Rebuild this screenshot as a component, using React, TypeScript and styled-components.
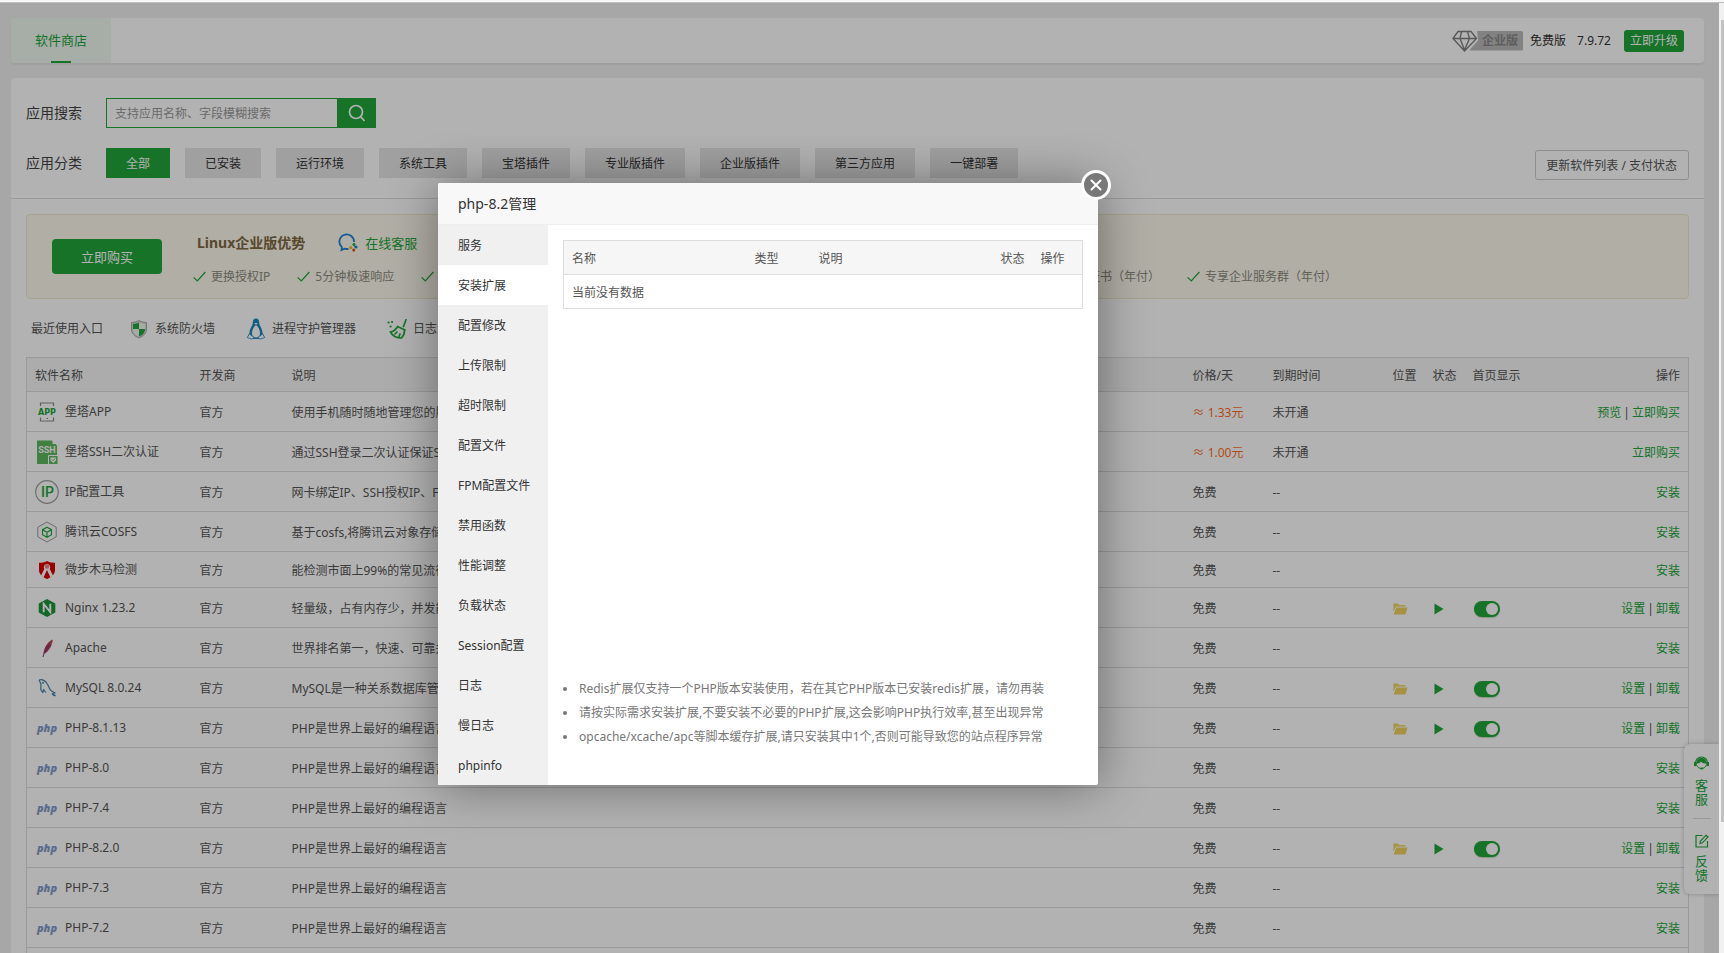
import React from "react";
import styled, { createGlobalStyle } from "styled-components";

const green = "#20a53a";

const GlobalStyle = createGlobalStyle`
  *, *::before, *::after { box-sizing: border-box; }
  body {
    margin: 0;
    font-family: "Noto Sans", "Noto Sans CJK SC", sans-serif;
    font-size: 12px;
    line-height: 20px;
    color: #555;
    background: #f0f0f0;
  }
  button, input { font: inherit; }
  button { cursor: pointer; border: 0; padding: 0; }
  a { color: ${green}; text-decoration: none; }
  ul { list-style: none; margin: 0; padding: 0; }
  svg { display: block; flex: none; }
`;

/* ---------- frame ---------- */

const Frame = styled.div`
  display: flex;
  flex-direction: column;
  height: 100vh;
`;

const TopStrip = styled.div`
  flex: none;
  height: 3px;
  background: #f8f8f8;
  border-bottom: 1px solid #bdbdbd;
`;

const FrameBody = styled.div`
  flex: 1;
  min-height: 0;
  display: flex;
`;

const Viewport = styled.div`
  position: relative;
  flex: 1;
  min-width: 0;
  overflow: hidden;
`;

const ScrollTrack = styled.div`
  flex: none;
  width: 5px;
  padding: 17px 0 0 2px;
  background: #f1f1f1;
`;

const ScrollThumb = styled.div`
  height: 86%;
  background: #c1c1c1;
`;

const Page = styled.main`
  display: flex;
  flex-direction: column;
  gap: 15px;
  padding: 15px 15px 0 11px;
`;

/* ---------- header bar ---------- */

const HeaderBar = styled.header`
  display: flex;
  justify-content: space-between;
  height: 45px;
  background: #fff;
  border-radius: 4px;
  box-shadow: 0 2px 2px rgba(0, 0, 0, 0.06);
`;

const HeaderTab = styled.a`
  display: flex;
  flex-direction: column;
  align-items: center;
  justify-content: flex-end;
  gap: 11px;
  width: 100px;
  font-size: 13px;
  background: #eff9f1;
  border-radius: 4px 0 0 4px;

  &::after {
    content: "";
    width: 20px;
    height: 2px;
    background: ${green};
  }
`;

const Account = styled.div`
  display: flex;
  align-items: center;
  padding-right: 20px;
  color: #333;
`;

const Edition = styled.div`
  display: flex;
  align-items: center;
  margin-right: 7px;
`;

const EditionLabel = styled.span`
  height: 20px;
  margin-left: -9px;
  padding: 0 5px 0 13px;
  font-size: 12px;
  font-weight: bold;
  color: #888;
  background: #bababa;
  border-radius: 2px;
  clip-path: polygon(8px 0, 100% 0, 100% 100%, 0 100%, 9px 50%);
`;

const Version = styled.span`
  margin: 0 13px 0 11px;
`;

const UpgradeButton = styled.button`
  height: 22px;
  padding: 0 6px;
  color: #fff;
  background: ${green};
  border-radius: 3px;
`;

/* ---------- filters ---------- */

const Card = styled.section`
  background: #fff;
  border-radius: 4px;
`;

const Filters = styled.div`
  display: flex;
  justify-content: space-between;
  align-items: flex-end;
  padding: 20px 15px 18px;
  border-bottom: 1px solid #ddd;
`;

const FilterRows = styled.div`
  display: grid;
  gap: 20px;
  padding-bottom: 2px;
`;

const FilterRow = styled.div`
  display: flex;
  align-items: center;
  height: 30px;
`;

const FilterLabel = styled.label`
  width: 80px;
  font-size: 14px;
  color: #444;
`;

const SearchInput = styled.input`
  width: 231px;
  height: 30px;
  padding: 0 8px;
  border: 1px solid ${green};
  border-right: 0;
  outline: 0;

  &::placeholder { color: #999; }
`;

const SearchButton = styled.button`
  display: grid;
  place-items: center;
  width: 39px;
  height: 30px;
  background: ${green};
`;

const CategoryList = styled.div`
  display: flex;
  gap: 15px;
`;

const CategoryButton = styled.button<{ $active?: boolean }>`
  height: 30px;
  padding: 2px 20px 0;
  color: ${(p) => (p.$active ? "#fff" : "#333")};
  background: ${(p) => (p.$active ? green : "#e5e5e5")};
`;

const RefreshButton = styled.button`
  height: 30px;
  padding: 2px 11px 0 10px;
  color: #555;
  background: #fff;
  border: 1px solid #ccc;
  border-radius: 3px;
`;

/* ---------- promotion ---------- */

const CardBody = styled.div`
  padding: 15px;
`;

const Promo = styled.div`
  display: flex;
  align-items: center;
  gap: 31px;
  height: 85px;
  padding: 0 25px;
  background: #fdf9ec;
  border: 1px solid #f1e9d0;
  border-radius: 4px;
  overflow: hidden;
`;

const BuyButton = styled.button`
  flex: none;
  width: 110px;
  height: 35px;
  font-size: 13px;
  color: #fff;
  background: ${green};
  border-radius: 4px;
`;

const PromoText = styled.div`
  display: grid;
  gap: 14px;
  padding-top: 6px;
`;

const PromoHead = styled.div`
  display: flex;
  align-items: center;
  padding-left: 4px;
`;

const PromoTitle = styled.strong`
  margin-right: 33px;
  font-size: 14px;
  color: #7d6843;
`;

const ServiceLink = styled.a`
  display: flex;
  align-items: center;
  gap: 7px;
  font-size: 13px;
`;

const Benefits = styled.ul`
  display: flex;
  gap: 27px;
  white-space: nowrap;
  color: #8b8b80;
`;

const Benefit = styled.li`
  display: flex;
  align-items: center;
  gap: 5px;
`;

/* ---------- recent entries ---------- */

const Recent = styled.nav`
  display: flex;
  align-items: center;
  gap: 31px;
  height: 58px;
  padding: 2px 5px 0;
`;

const RecentTitle = styled.span`
  margin-right: -5px;
`;

const RecentLink = styled.a`
  display: flex;
  align-items: center;
  gap: 6px;
  color: #555;
`;

/* ---------- software table ---------- */

const SoftTable = styled.table`
  width: 100%;
  table-layout: fixed;
  border-collapse: collapse;
  border: 1px solid #ddd;
`;

const Th = styled.th<{ $right?: boolean }>`
  height: 34px;
  padding: 2px 8px 0;
  font-weight: normal;
  text-align: ${(p) => (p.$right ? "right" : "left")};
  white-space: nowrap;
  background: #f6f6f6;
`;

const Tr = styled.tr<{ $short?: boolean }>`
  height: ${(p) => (p.$short ? 36 : 40)}px;
  border-top: 1px solid #ddd;
`;

const Td = styled.td`
  padding: 2px 8px 0;
  white-space: nowrap;
  overflow: hidden;
`;

const NameCell = styled(Td)`
  padding-top: 0;
`;

const EmptyCell = styled(Td)`
  height: 34px;
  border-top: 1px solid #ddd;
`;

const SoftName = styled.div`
  display: flex;
  align-items: center;
  gap: 6px;
`;

const Actions = styled.div`
  display: flex;
  justify-content: flex-end;
  gap: 2px;
`;

const Price = styled.span`
  color: #fc6d26;
`;

const IconButton = styled.button`
  display: block;
  background: none;
`;

const Toggle = styled.input`
  display: block;
  appearance: none;
  width: 26px;
  height: 16px;
  margin: 0 0 0 1px;
  padding: 2px;
  background: ${green};
  border-radius: 8px;
  box-shadow: 0 1px 1px rgba(0, 0, 0, 0.2);

  &::before {
    content: "";
    display: block;
    width: 12px;
    height: 12px;
    margin-left: 10px;
    background: #fff;
    border-radius: 6px;
  }
`;

/* ---------- floating service box ---------- */

const ServiceBox = styled.aside`
  position: absolute;
  right: 0;
  bottom: 59px;
  display: flex;
  flex-direction: column;
  align-items: center;
  width: 35px;
  height: 150px;
  padding: 12px 0;
  background: #fff;
  border-radius: 6px 0 0 6px;
  box-shadow: 0 0 4px rgba(0, 0, 0, 0.25);
`;

const ServiceItem = styled.a`
  display: flex;
  flex-direction: column;
  align-items: center;
  gap: 8px;
  width: 18px;
  font-size: 13px;
  line-height: 14px;
  text-align: center;

  & + & {
    gap: 6px;
    margin-top: 12px;
    padding-top: 15px;
    border-top: 1px solid #ddd;
  }
`;

/* ---------- dialog ---------- */

const Shade = styled.div`
  position: absolute;
  inset: 0;
  background: rgba(0, 0, 0, 0.3);
`;

const Dialog = styled.section`
  position: absolute;
  left: 438px;
  top: 180px;
  width: 660px;
  background: #fff;
  border-radius: 2px;
  box-shadow: 1px 1px 50px rgba(0, 0, 0, 0.4);
`;

const DialogTitle = styled.h2`
  height: 42px;
  margin: 0;
  padding: 0 20px;
  font-size: 14px;
  font-weight: normal;
  line-height: 42px;
  color: #333;
  background: #f8f8f8;
  border-bottom: 1px solid #eee;
  border-radius: 2px 2px 0 0;
`;

const CloseButton = styled.button`
  position: absolute;
  top: -13px;
  right: -13px;
  display: grid;
  place-items: center;
  width: 30px;
  height: 30px;
  background: #787878;
  border: 3px solid #fff;
  border-radius: 50%;
`;

const DialogBody = styled.div`
  display: flex;
`;

const Menu = styled.nav`
  flex: none;
  width: 110px;
  background: #f0f0f0;
`;

const MenuItem = styled.button<{ $active?: boolean }>`
  display: block;
  width: 100%;
  height: 40px;
  padding: 2px 0 0 20px;
  text-align: left;
  color: #333;
  background: ${(p) => (p.$active ? "#fff" : "transparent")};
`;

const Panel = styled.div`
  flex: 1;
  display: flex;
  flex-direction: column;
  justify-content: space-between;
  padding: 15px 15px 36px;
`;

const Notes = styled.ul`
  line-height: 24px;
  color: #777;
`;

const Note = styled.li`
  display: flex;
  align-items: center;
  gap: 12px;
  white-space: nowrap;

  &::before {
    content: "";
    width: 4px;
    height: 4px;
    background: #777;
    border-radius: 50%;
  }
`;

/* ---------- icons ---------- */

const DiamondIcon = () => (
  <svg width="26" height="22" viewBox="0 0 26 22" fill="none" stroke="#808080" strokeWidth="1.4">
    <path d="M6 1.5h13l5.500 7L12.500 21 1 8.500z M1 8.500h23.500 M9.500 1.500 8 8.500 12.500 20 17.500 8.500 15.500 1.500" />
  </svg>
);

const SearchIcon = () => (
  <svg width="18" height="18" viewBox="0 0 18 18" fill="none" stroke="#fff" strokeWidth="1.700">
    <circle cx="8" cy="8" r="6.500" />
    <path d="M12.500 12.500 16.500 17" />
  </svg>
);

const ChatIcon = () => (
  <svg width="20" height="20" viewBox="0 0 20 20" fill="none">
    <path d="M10.500 15.800c-1.300.3-2.700.2-4-.2L3.500 17l.4-2.800A7.300 7.300 0 1 1 16 9" stroke="#1f80d8" strokeWidth="1.800" />
    <path d="M15.800 9.500l1.200 2.500-1.700 1z" fill="#1fae4f" />
    <path d="M19.500 13.500l-2.500 1.200-1-1.700z" fill="#1f80d8" />
    <path d="M15.500 19l-1.200-2.600 1.800-1z" fill="#f0502a" />
    <path d="M10.800 15l2.600-1.300 1.200 2z" fill="#f5b51c" />
    <circle cx="16" cy="11.500" r="1.500" fill="#1fae4f" />
    <circle cx="18" cy="14" r="1.500" fill="#1f80d8" />
    <circle cx="15.800" cy="17" r="1.500" fill="#f0502a" />
    <circle cx="12.800" cy="14.500" r="1.500" fill="#f5b51c" />
  </svg>
);

const CheckIcon = () => (
  <svg width="13" height="12" viewBox="0 0 13 12" fill="none" stroke={green} strokeWidth="1.200">
    <path d="M.6 6.300 4.300 10 12.400 1" />
  </svg>
);

const ShieldIcon = () => (
  <svg width="20" height="20" viewBox="0 0 20 20">
    <path d="M10 1.500C7.500 3 5 3.300 2.500 3.500V10c0 4.500 3 7 7.500 9 4.500-2 7.500-4.500 7.500-9V3.500C15 3.300 12.500 3 10 1.500z" fill="#d8d8d8" stroke="#a8a8a8" strokeWidth="1" />
    <path d="M10 3.500V10H4V5C6.500 4.900 8.500 4.400 10 3.500z M10 10h6c0 3.800-2 5.800-6 7.500z" fill={green} />
    <path d="M10 3.500V10h6V5c-2.500-.1-4.500-.6-6-1.500z M10 10H4c0 3.800 2 5.800 6 7.500z" fill="#eef5ee" />
  </svg>
);

const PenguinIcon = () => (
  <svg width="20" height="22" viewBox="0 0 20 22">
    <path d="M10 .5c-2.600 0-3.300 2-3.200 4.500.1 2.500-3.300 5.500-3.300 10L2 18l5 3h6l5-3-1.500-3c0-4.500-3.400-7.500-3.300-10C13.300 2.500 12.600.5 10 .5z" fill="#1b86bd" />
    <path d="M10 7C8 8.500 6 11.500 6 15c0 3 1.500 4.500 4 4.500s4-1.500 4-4.500c0-3.500-2-6.500-4-8z" fill="#fff" />
    <path d="M3.500 16 1.200 19.500 6 21.200 8 19.500z M16.500 16l2.300 3.500-4.800 1.700-2-1.700z" fill="#fff" stroke="#1b86bd" strokeWidth=".8" />
    <path d="M8.500 5 10 7l1.500-2z" fill="#fff" />
  </svg>
);

const BroomIcon = () => (
  <svg width="20" height="20" viewBox="0 0 20 20" fill="none" stroke={green} strokeWidth="1.700" strokeLinecap="round">
    <path d="M19 .8 16.500 7.500 M10.500 7.500l7.500 3.500 M10 8.500c-1.500 2.500-3.500 4-6.500 4.500 2 4 6.500 6 11 6 2-2 3-4.500 3-7.500" />
    <path d="M8 15l2-2 M12 17.500l1-2.500" />
    <path d="M1.500 3.500h.1 M5 3h.1 M3.500 7.500h.1" strokeWidth="2.200" />
  </svg>
);

const AppIcon = () => (
  <svg width="24" height="24" viewBox="0 0 24 24" fill="none" stroke="#8a8a8a" strokeWidth="1.200">
    <path d="M5.500 6V3h13v3 M5.500 17.500V21h13v-3.500 M11.500 18.500h1.500" />
    <text x="12" y="14.500" textAnchor="middle" fontSize="8" fontWeight="bold" fontFamily="DejaVu Sans, sans-serif" fill={green} stroke="none">APP</text>
  </svg>
);

const SshIcon = () => (
  <svg width="24" height="24" viewBox="0 0 24 24">
    <path d="M2 .5h15l5 5V24H2z" fill="#5cb85c" />
    <path d="M17.500 0v4h4.500z" fill="#fff" />
    <text x="12" y="12.500" textAnchor="middle" fontSize="9" fontWeight="bold" fontFamily="Roboto, sans-serif" fill="#fff">SSH</text>
    <path d="M13.500 15.500h9.500v9H13.500z" fill="#5cb85c" stroke="#fff" strokeWidth="1" />
    <path d="M15.500 17.500h5.500v3l-2.700 2.500-2.800-2.500z" fill="#fff" />
    <path d="m17 19.500 1.200 1.200L20 18.500" stroke="#5cb85c" fill="none" />
  </svg>
);

const IpIcon = () => (
  <svg width="24" height="24" viewBox="0 0 24 24">
    <circle cx="12" cy="12" r="11.300" fill="none" stroke="#a0a0a0" strokeWidth="1.200" />
    <text x="12.500" y="17" textAnchor="middle" fontSize="14" fontWeight="500" fontFamily="Roboto, sans-serif" fill={green}>IP</text>
  </svg>
);

const CosIcon = () => (
  <svg width="24" height="24" viewBox="0 0 24 24" fill="none">
    <path d="M12 2 21.200 7.200v9.600L12 22l-9.200-5.200V7.200z" stroke="#9a9a9a" />
    <path d="M12 7.200 16.500 9.700v5L12 17.200l-4.500-2.500v-5z M7.500 9.700l4.500 2.600 4.500-2.600 M12 12.300v4.900" stroke={green} strokeWidth="1.200" />
  </svg>
);

const TrojanIcon = () => (
  <svg width="24" height="24" viewBox="0 0 24 24">
    <path d="M12 3C9 4.500 6.500 4.800 4 4.800V12c0 4 3 7 8 9 5-2 8-5 8-9V4.800C17.500 4.800 15 4.500 12 3z" fill="#dd0000" />
    <path d="M12 6a3.200 3.200 0 0 0-2.700 5L6 17.500l2.500 2L12 12l3.500 7.500 2.500-2-3.300-6.500A3.200 3.200 0 0 0 12 6z" fill="#fff" />
    <circle cx="12" cy="8.500" r="2.200" fill="#e88" />
  </svg>
);

const NginxIcon = () => (
  <svg width="24" height="24" viewBox="0 0 24 24">
    <path d="M12 3 20.300 7.500v9L12 21l-8.300-4.500v-9z" fill="#1d9439" />
    <path d="M8.700 16.200V8l6.600 8V7.800" fill="none" stroke="#fff" strokeWidth="1.900" />
  </svg>
);

const FeatherIcon = () => (
  <svg width="24" height="24" viewBox="0 0 24 24">
    <path d="M17.500 3.500C13.500 5.500 9.500 10 8.500 17l1.500.5c4-3 7.500-8 7.500-14z" fill="#b03a60" />
    <path d="M17.500 3.500c-.8 1-1.500 3-3 5l2.300-.7c.6-1.500.8-3 .7-4.300z" fill="#b86a50" />
    <path d="M8 21 9.500 16 14 9" fill="none" stroke="#7a3468" />
  </svg>
);

const DolphinIcon = () => (
  <svg width="24" height="24" viewBox="0 0 24 24" fill="none" stroke="#4483a3" strokeWidth="1.200" strokeLinejoin="round">
    <path d="M4 4c3-1 6 .5 8 3.500 2.500 3.500 2 6 4.500 7.500l3.500 2-2.500.5L20.500 20 M4 4l2 4c0 2-.6 4 .2 6.500l1.600 2 .8-3 2.200 3M17 17.500l2.500 2.500" />
    <circle cx="8" cy="6.800" r=".4" />
  </svg>
);

const PhpIcon = () => (
  <svg width="24" height="24" viewBox="0 0 24 24">
    <text x="12" y="16" textAnchor="middle" fontSize="11" fontWeight="800" fontStyle="italic" fontFamily="Open Sans, sans-serif" fill="#849cc8">php</text>
  </svg>
);

const FolderIcon = () => (
  <svg width="15" height="13" viewBox="0 0 15 13" fill="#f0d060">
    <path d="M.5 9.500V1.500h4.500l1 1.500h6.500v1.500H3z" />
    <path d="M3.300 5.500H14.500L12.500 12.500H.8z" />
  </svg>
);

const PlayIcon = () => (
  <svg width="12" height="12" viewBox="0 0 12 12" fill={green}>
    <path d="M1.500.5 10.500 6l-9 5.500z" />
  </svg>
);

const AgentIcon = () => (
  <svg width="15" height="14" viewBox="0 0 15 14">
    <path d="M1.500 7a6 6 0 0 1 12 0" fill="none" stroke={green} strokeWidth="1.200" />
    <path d="M2.500 7.500C2.500 4 4.500 2 7.500 2s5 2 5 5.500C10 7.500 8 7 7 5.500 6 7 4.500 7.500 2.500 7.500z" fill={green} />
    <rect x="0" y="5.800" width="2.800" height="4.400" rx="1.200" fill={green} />
    <rect x="12.200" y="5.800" width="2.800" height="4.400" rx="1.200" fill={green} />
    <path d="M3 9.500c.8 2 2.400 3 4.500 3s3.700-1 4.500-3" fill="none" stroke={green} />
    <path d="M6.500 12.500h2.500" stroke={green} strokeWidth="1.800" />
  </svg>
);

const EditIcon = () => (
  <svg width="14" height="14" viewBox="0 0 14 14" fill="none" stroke={green} strokeWidth="1.200">
    <path d="M7.500 1.500H1v11.500h11.500V7 M5 9.500l.5-2.500L11 1.200l2 1.600L7.500 8.800z" />
  </svg>
);

const CloseIcon = () => (
  <svg width="14" height="14" viewBox="0 0 14 14" stroke="#fff" strokeWidth="2" strokeLinecap="round">
    <path d="M2.500 2.500l9 9M11.500 2.500l-9 9" />
  </svg>
);

/* ---------- data ---------- */

const categories = ["全部", "已安装", "运行环境", "系统工具", "宝塔插件", "专业版插件", "企业版插件", "第三方应用", "一键部署"];

const benefits = [
  "更换授权IP",
  "5分钟极速响应",
  "15天无理由退款",
  "30+款付费插件",
  "20+企业版专享功能",
  "1000条免费短信（年付）",
  "2张SSL商用证书（年付）",
  "专享企业服务群（年付）",
];

const recent = [
  { name: "系统防火墙", icon: <ShieldIcon /> },
  { name: "进程守护管理器", icon: <PenguinIcon /> },
  { name: "日志清理工具", icon: <BroomIcon /> },
];

type Software = {
  name: string;
  icon: React.ReactNode;
  desc: string;
  price?: string;
  actions: string[];
  installed?: boolean;
  short?: boolean;
};

const php = (version: string, installed = false): Software => ({
  name: `PHP-${version}`,
  icon: <PhpIcon />,
  desc: "PHP是世界上最好的编程语言",
  actions: installed ? ["设置", "卸载"] : ["安装"],
  installed,
});

const software: Software[] = [
  { name: "堡塔APP", icon: <AppIcon />, desc: "使用手机随时随地管理您的服务器", price: "1.33", actions: ["预览", "立即购买"] },
  { name: "堡塔SSH二次认证", icon: <SshIcon />, desc: "通过SSH登录二次认证保证SSH安全", price: "1.00", actions: ["立即购买"] },
  { name: "IP配置工具", icon: <IpIcon />, desc: "网卡绑定IP、SSH授权IP、FTP授权IP", actions: ["安装"] },
  { name: "腾讯云COSFS", icon: <CosIcon />, desc: "基于cosfs,将腾讯云对象存储挂载到本地", actions: ["安装"] },
  { name: "微步木马检测", icon: <TrojanIcon />, desc: "能检测市面上99%的常见流行木马", actions: ["安装"], short: true },
  { name: "Nginx 1.23.2", icon: <NginxIcon />, desc: "轻量级，占有内存少，并发能力强", actions: ["设置", "卸载"], installed: true },
  { name: "Apache", icon: <FeatherIcon />, desc: "世界排名第一，快速、可靠并且可扩充", actions: ["安装"] },
  { name: "MySQL 8.0.24", icon: <DolphinIcon />, desc: "MySQL是一种关系数据库管理系统", actions: ["设置", "卸载"], installed: true },
  php("8.1.13", true),
  php("8.0"),
  php("7.4"),
  php("8.2.0", true),
  php("7.3"),
  php("7.2"),
  php("7.1"),
];

const menu = ["服务", "安装扩展", "配置修改", "上传限制", "超时限制", "配置文件", "FPM配置文件", "禁用函数", "性能调整", "负载状态", "Session配置", "日志", "慢日志", "phpinfo"];

const notes = [
  "Redis扩展仅支持一个PHP版本安装使用，若在其它PHP版本已安装redis扩展，请勿再装",
  "请按实际需求安装扩展,不要安装不必要的PHP扩展,这会影响PHP执行效率,甚至出现异常",
  "opcache/xcache/apc等脚本缓存扩展,请只安装其中1个,否则可能导致您的站点程序异常",
];

/* ---------- sections ---------- */

const SoftwareRow = ({ item }: { item: Software }) => (
  <Tr $short={item.short}>
    <NameCell>
      <SoftName>
        {item.icon}
        {item.name}
      </SoftName>
    </NameCell>
    <Td>官方</Td>
    <Td>{item.desc}</Td>
    <Td>{item.price ? <Price>≈ {item.price}元</Price> : "免费"}</Td>
    <Td>{item.price ? "未开通" : "--"}</Td>
    <Td>{item.installed && <IconButton aria-label="打开目录"><FolderIcon /></IconButton>}</Td>
    <Td>{item.installed && <IconButton aria-label="运行状态"><PlayIcon /></IconButton>}</Td>
    <Td>{item.installed && <Toggle type="checkbox" defaultChecked aria-label={`${item.name} 首页显示`} />}</Td>
    <Td>
      <Actions>
        {item.actions.map((action, i) => (
          <React.Fragment key={action}>
            {i > 0 && <span>|</span>}
            <a href="#">{action}</a>
          </React.Fragment>
        ))}
      </Actions>
    </Td>
  </Tr>
);

const ManageDialog = () => (
  <Dialog role="dialog" aria-labelledby="dialog-title">
    <DialogTitle id="dialog-title">php-8.2管理</DialogTitle>
    <CloseButton aria-label="关闭"><CloseIcon /></CloseButton>
    <DialogBody>
      <Menu>
        {menu.map((m) => (
          <MenuItem key={m} $active={m === "安装扩展"}>{m}</MenuItem>
        ))}
      </Menu>
      <Panel>
        <SoftTable>
          <colgroup>
            <col />
            <col width="64" />
            <col width="182" />
            <col width="40" />
            <col width="50" />
          </colgroup>
          <thead>
            <tr>
              <Th>名称</Th>
              <Th>类型</Th>
              <Th>说明</Th>
              <Th>状态</Th>
              <Th>操作</Th>
            </tr>
          </thead>
          <tbody>
            <tr>
              <EmptyCell colSpan={5}>当前没有数据</EmptyCell>
            </tr>
          </tbody>
        </SoftTable>
        <Notes>
          {notes.map((n) => <Note key={n}>{n}</Note>)}
        </Notes>
      </Panel>
    </DialogBody>
  </Dialog>
);

export default function App() {
  return (
    <Frame>
      <GlobalStyle />
      <TopStrip />
      <FrameBody>
        <Viewport>
          <Page>
            <HeaderBar>
              <HeaderTab href="#">软件商店</HeaderTab>
              <Account>
                <Edition>
                  <DiamondIcon />
                  <EditionLabel>企业版</EditionLabel>
                </Edition>
                <span>免费版</span>
                <Version>7.9.72</Version>
                <UpgradeButton>立即升级</UpgradeButton>
              </Account>
            </HeaderBar>
            <Card>
              <Filters>
                <FilterRows>
                  <FilterRow>
                    <FilterLabel htmlFor="search">应用搜索</FilterLabel>
                    <SearchInput id="search" placeholder="支持应用名称、字段模糊搜索" />
                    <SearchButton aria-label="搜索"><SearchIcon /></SearchButton>
                  </FilterRow>
                  <FilterRow>
                    <FilterLabel as="span">应用分类</FilterLabel>
                    <CategoryList>
                      {categories.map((c) => (
                        <CategoryButton key={c} $active={c === "全部"}>{c}</CategoryButton>
                      ))}
                    </CategoryList>
                  </FilterRow>
                </FilterRows>
                <RefreshButton>更新软件列表 / 支付状态</RefreshButton>
              </Filters>
              <CardBody>
                <Promo>
                  <BuyButton>立即购买</BuyButton>
                  <PromoText>
                    <PromoHead>
                      <PromoTitle>Linux企业版优势</PromoTitle>
                      <ServiceLink href="#"><ChatIcon />在线客服</ServiceLink>
                    </PromoHead>
                    <Benefits>
                      {benefits.map((b) => (
                        <Benefit key={b}><CheckIcon />{b}</Benefit>
                      ))}
                    </Benefits>
                  </PromoText>
                </Promo>
                <Recent>
                  <RecentTitle>最近使用入口</RecentTitle>
                  {recent.map((r) => (
                    <RecentLink key={r.name} href="#">{r.icon}{r.name}</RecentLink>
                  ))}
                </Recent>
                <SoftTable>
                  <colgroup>
                    <col width="165" />
                    <col width="92" />
                    <col />
                    <col width="80" />
                    <col width="120" />
                    <col width="40" />
                    <col width="40" />
                    <col width="100" />
                    <col width="124" />
                  </colgroup>
                  <thead>
                    <tr>
                      <Th>软件名称</Th>
                      <Th>开发商</Th>
                      <Th>说明</Th>
                      <Th>价格/天</Th>
                      <Th>到期时间</Th>
                      <Th>位置</Th>
                      <Th>状态</Th>
                      <Th>首页显示</Th>
                      <Th $right>操作</Th>
                    </tr>
                  </thead>
                  <tbody>
                    {software.map((s) => <SoftwareRow key={s.name} item={s} />)}
                  </tbody>
                </SoftTable>
              </CardBody>
            </Card>
          </Page>
          <ServiceBox>
            <ServiceItem href="#"><AgentIcon />客服</ServiceItem>
            <ServiceItem href="#"><EditIcon />反馈</ServiceItem>
          </ServiceBox>
          <Shade />
          <ManageDialog />
        </Viewport>
        <ScrollTrack><ScrollThumb /></ScrollTrack>
      </FrameBody>
    </Frame>
  );
}
